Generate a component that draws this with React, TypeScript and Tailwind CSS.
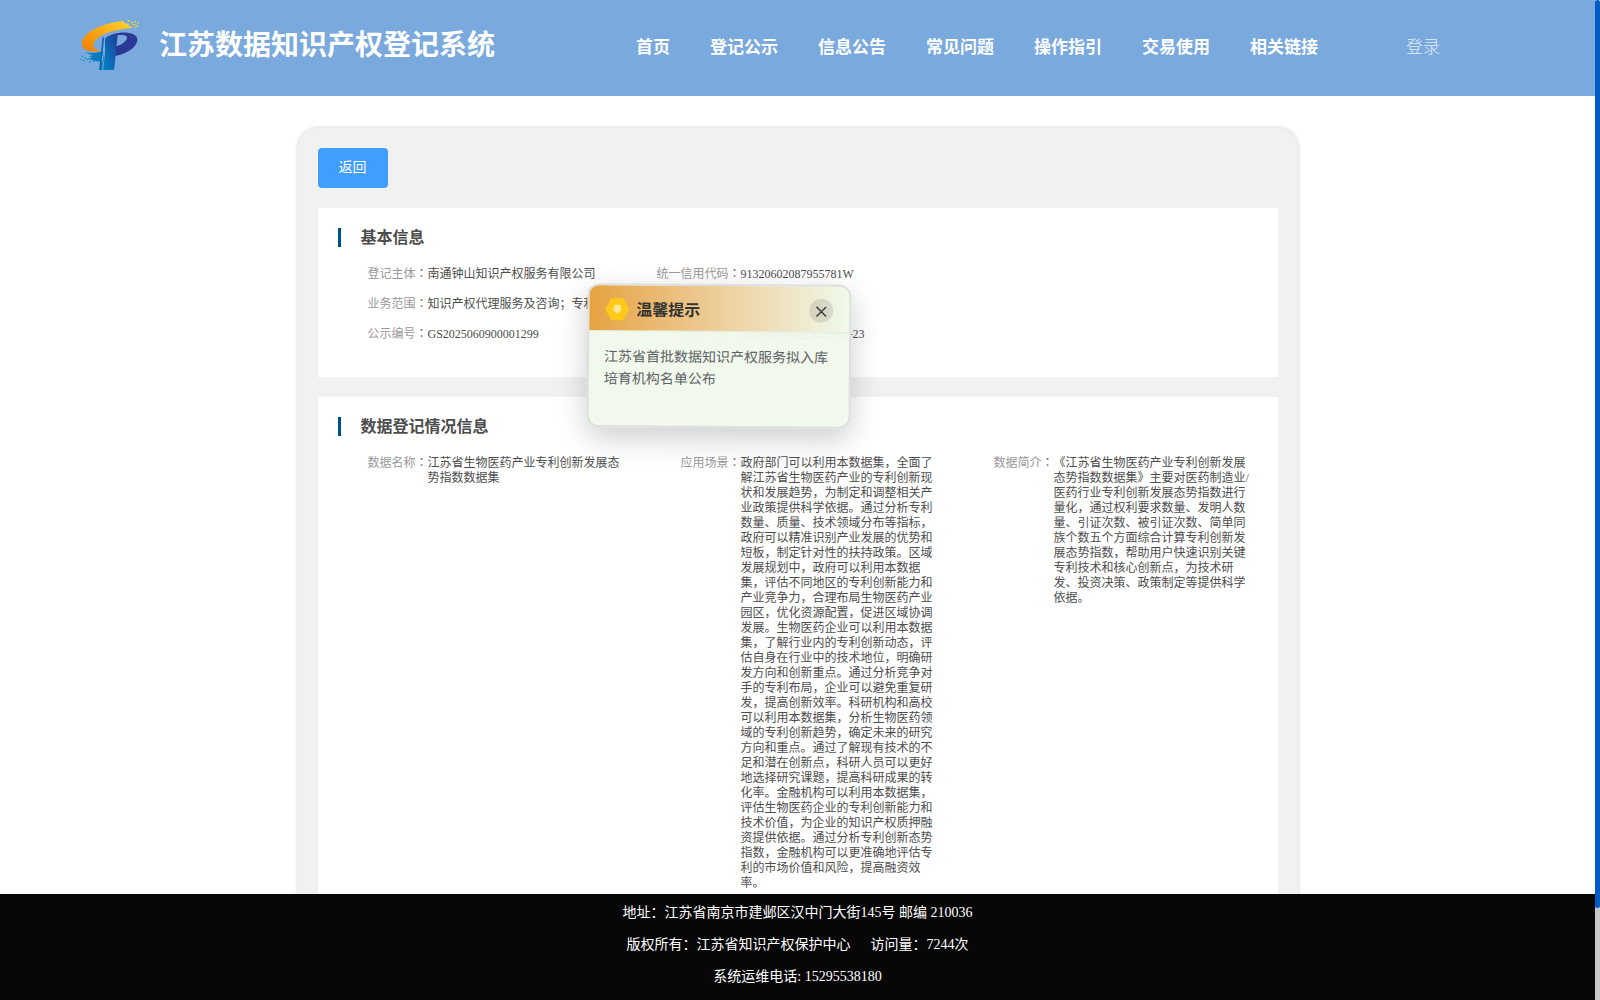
import React from 'react';

interface Field {
  label: string;
  value: string;
}

const navItems = ['首页', '登记公示', '信息公告', '常见问题', '操作指引', '交易使用', '相关链接'];

const dataFields: Field[] = [
  { label: '数据名称', value: '江苏省生物医药产业专利创新发展态势指数数据集' },
  {
    label: '应用场景',
    value:
      '政府部门可以利用本数据集，全面了解江苏省生物医药产业的专利创新现状和发展趋势，为制定和调整相关产业政策提供科学依据。通过分析专利数量、质量、技术领域分布等指标，政府可以精准识别产业发展的优势和短板，制定针对性的扶持政策。区域发展规划中，政府可以利用本数据集，评估不同地区的专利创新能力和产业竞争力，合理布局生物医药产业园区，优化资源配置，促进区域协调发展。生物医药企业可以利用本数据集，了解行业内的专利创新动态，评估自身在行业中的技术地位，明确研发方向和创新重点。通过分析竞争对手的专利布局，企业可以避免重复研发，提高创新效率。科研机构和高校可以利用本数据集，分析生物医药领域的专利创新趋势，确定未来的研究方向和重点。通过了解现有技术的不足和潜在创新点，科研人员可以更好地选择研究课题，提高科研成果的转化率。金融机构可以利用本数据集，评估生物医药企业的专利创新能力和技术价值，为企业的知识产权质押融资提供依据。通过分析专利创新态势指数，金融机构可以更准确地评估专利的市场价值和风险，提高融资效率。',
  },
  {
    label: '数据简介',
    value:
      '《江苏省生物医药产业专利创新发展态势指数数据集》主要对医药制造业/医药行业专利创新发展态势指数进行量化，通过权利要求数量、发明人数量、引证次数、被引证次数、简单同族个数五个方面综合计算专利创新发展态势指数，帮助用户快速识别关键专利技术和核心创新点，为技术研发、投资决策、政策制定等提供科学依据。',
  },
];

const Logo: React.FC = () => (
  <svg viewBox="60 54 180 162" className="-mt-1.5 h-[54px] w-[60px] shrink-0">
    <defs>
      <linearGradient id="swoosh" x1="0" y1="1" x2="1" y2="0">
        <stop offset="0" stopColor="#f07c00" />
        <stop offset="1" stopColor="#ffd62b" />
      </linearGradient>
      <linearGradient id="stem" x1="0" y1="1" x2="1" y2="0">
        <stop offset="0" stopColor="#0087c8" />
        <stop offset="1" stopColor="#1d3f9c" />
      </linearGradient>
    </defs>
    <path d="M190 63 C130 68 62 98 66 134 C68 148 84 157 116 154 L122 151 C98 147 94 134 108 119 C130 98 170 88 216 84 L214 79 L204 78 L208 72 L194 70 Z" fill="url(#swoosh)" />
    <path d="M135 117 C145 104 177 96 202 98 C225 100 236 111 231 126 C224 147 193 164 164 168 L167 139 C184 136 199 124 201 114 C202 105 190 103 173 106 Z" fill="#2b3896" />
    <path d="M135 117 Q151 105 173 106 L163 205 Q162 210 157 210 L129 210 L135 160 Z" fill="url(#stem)" />
    <path d="M74 157 C95 161 112 158 129 153 L120 210 L126 210 L132 160 L132 184 C113 187 97 182 83 175 L96 174 L87 168 L99 167 L87 162 Z" fill="#087ec0" />
    <path d="M130 112 L120 210" stroke="#0c68ae" strokeWidth="5" />
    <path d="M203 61h7v4h-7zM213 66h6v4h-6zM222 63h6v4h-6zM231 66h5v4h-5zM219 72h7v4h-7zM229 75h6v4h-6zM225 80h5v4h-5z" fill="#f8d829" />
    <path d="M64 167h5v4h-5zM61 176h5v4h-5zM72 172h7v4h-7zM69 180h5v4h-5zM80 177h6v4h-6zM87 184h6v4h-6zM98 183h6v4h-6z" fill="#2499d2" />
  </svg>
);

const SectionTitle: React.FC<{ children: React.ReactNode }> = ({ children }) => (
  <div className="flex h-[19px] items-center border-l-[3px] border-[#00508e] pl-5 text-base font-bold leading-[19px] text-[#4d4d4d]">
    {children}
  </div>
);

const Item: React.FC<Field & { className?: string }> = ({ label, value, className = '' }) => (
  <div className={`flex ${className}`}>
    <span className="shrink-0 whitespace-nowrap text-[#999]">
      {label}
      <span className="inline-block w-3 font-['Noto_Sans_CJK_TC',sans-serif] leading-none text-[#666]">：</span>
    </span>
    <span className="min-w-0 text-[#4d4d4d]">{value}</span>
  </div>
);

const Notice: React.FC = () => (
  <div className="absolute left-[587px] top-[284px] z-20 h-[144px] w-[264px] rotate-[0.4deg] overflow-hidden rounded-xl border-2 border-[#dcdedf] bg-[#f0f9eb]/95 shadow-[0_10px_30px_rgba(0,0,0,0.2)]">
    <div className="flex h-[45px] items-center bg-linear-to-r from-[#e6a23c] to-[#f0f9eb] pl-4 pr-4 pt-0.5 shadow-[0_1px_1px_rgba(0,0,0,0.05)]">
      <svg viewBox="0 0 24 24" className="size-6 shrink-0">
        <path d="M6 1h12l6 11-6 11H6L0 12z" fill="#ffc91b" />
        <g fill="none" stroke="#fff0b4" strokeWidth="1">
          <circle cx="12" cy="11.3" r="3.3" fill="#ffe27a" />
          <path d="M10.6 15.5h2.8M10.8 10.6l1.2 1.1 1.2-1.1M12 11.7v3" />
        </g>
      </svg>
      <span className="ml-[7px] mt-0.5 text-base font-bold text-[#333]">温馨提示</span>
      <span className="ml-auto flex size-6 items-center justify-center rounded-full bg-black/10">
        <svg viewBox="0 0 12 12" className="mt-[3px] size-3 text-[#444]">
          <path d="M1.2 1.2l9.6 9.6M10.8 1.2L1.2 10.8" stroke="currentColor" strokeWidth="1.6" />
        </svg>
      </span>
    </div>
    <p className="px-[15px] pt-4 text-sm leading-[22px] text-[#606266]">江苏省首批数据知识产权服务拟入库培育机构名单公布</p>
  </div>
);

export default function App() {
  return (
    <div className="relative flex h-[1000px] w-[1600px] overflow-hidden bg-white font-['Liberation_Serif','Noto_Sans_CJK_SC',serif] [text-spacing-trim:space-all]">
      <div className="flex w-[1595px] flex-col">
        {/* Header */}
        <header className="flex h-24 shrink-0 items-center bg-[#79a9dd] pl-20 text-white">
          <Logo />
          <h1 className="-mt-1 ml-[19px] w-[477px] text-[28px] font-bold">江苏数据知识产权登记系统</h1>
          <nav className="flex gap-10 whitespace-nowrap text-[17px] font-bold">
            {navItems.map(item => (
              <a key={item}>{item}</a>
            ))}
          </nav>
          <a className="ml-[88px] text-[17px] font-light text-[#e4eef8]">登录</a>
        </header>

        {/* Content */}
        <main className="min-h-0 flex-1 overflow-hidden pt-8">
          <div className="mx-auto h-[900px] w-[1000px] rounded-t-[20px] bg-[#f1f1f1] p-5 shadow-[0_0_4px_rgba(0,0,0,0.2)]">
            <button className="block h-10 w-[70px] rounded bg-[#409eff] text-sm text-white">返回</button>

            <section className="mt-5 h-[169px] bg-white p-5 text-xs leading-[15px]">
              <SectionTitle>基本信息</SectionTitle>
              <div className="mt-5 grid grid-cols-[289px_1fr] gap-y-[15px] pl-[30px]">
                <Item label="登记主体" value="南通钟山知识产权服务有限公司" />
                <Item label="统一信用代码" value="91320602087955781W" />
                <Item label="业务范围" value="知识产权代理服务及咨询；专利" className="col-span-2" />
                <Item label="公示编号" value="GS2025060900001299" />
                <Item label="公示时间" value="2025-06-10至2025-06-23" className="pl-6" />
              </div>
            </section>

            <section className="mt-5 h-[700px] bg-white p-5 text-xs leading-[15px]">
              <SectionTitle>数据登记情况信息</SectionTitle>
              <div className="mt-5 grid grid-cols-[256px_256px_256px] gap-x-[57px] pl-[30px]">
                {dataFields.map(field => (
                  <Item key={field.label} {...field} />
                ))}
              </div>
            </section>
          </div>
        </main>

        {/* Footer */}
        <footer className="h-[106px] shrink-0 bg-[#070707] pt-[3px] text-center text-sm leading-8 text-white">
          <p>地址：江苏省南京市建邺区汉中门大街145号 邮编 210036</p>
          <p>
            版权所有：江苏省知识产权保护中心<span className="ml-5">访问量：7244次</span>
          </p>
          <p>系统运维电话: 15295538180</p>
        </footer>
      </div>

      {/* Scrollbar */}
      <div className="h-full w-[5px] bg-[#c8c8c8]">
        <div className="h-[908px] rounded-full bg-[#005bc5]" />
      </div>

      <Notice />
    </div>
  );
}
